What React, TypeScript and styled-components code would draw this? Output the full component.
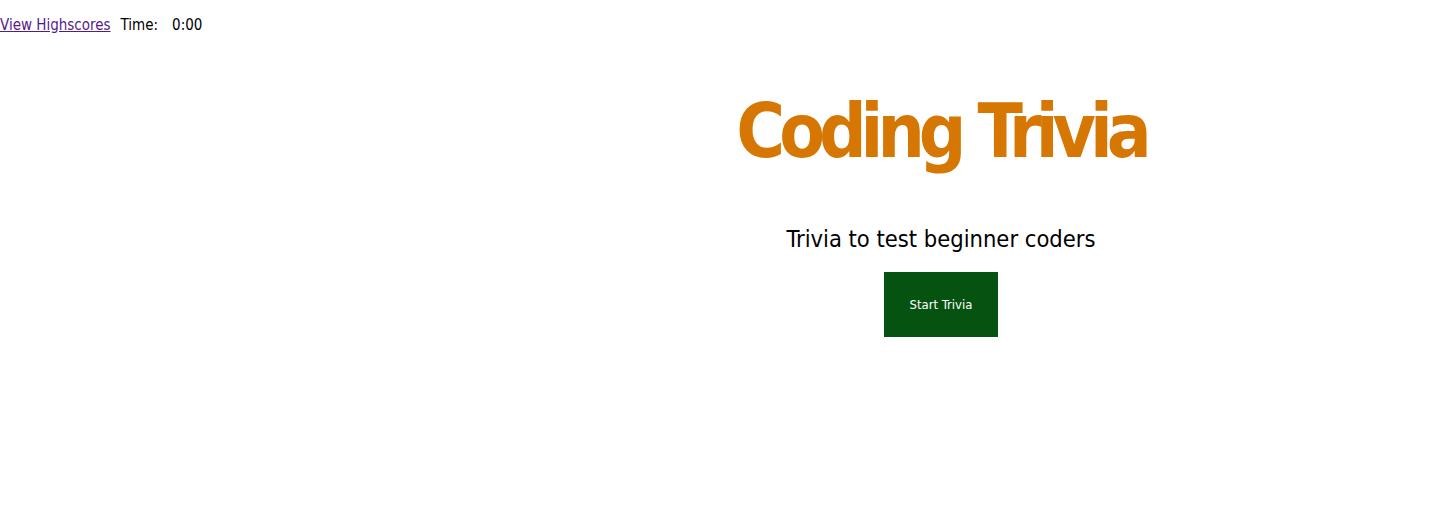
import React from "react";
import styled, { createGlobalStyle } from "styled-components";

const Global = createGlobalStyle`
  body { margin: 0; background: #fff; font-family: "DejaVu Sans Condensed", "Liberation Sans", sans-serif; }
`;

const Header = styled.header`
  display: flex;
  align-items: baseline;
  padding-top: 16px;
  font-size: 15px;
  color: #000;
`;

const Link = styled.a`
  color: #551a8b;
  text-decoration: underline;
  margin-right: 10px;
`;

const TimeLabel = styled.span`
  margin-right: 14px;
`;

const Layout = styled.div`
  display: grid;
  grid-template-columns: 445px 1fr;
`;

const Main = styled.main`
  grid-column: 2;
  display: flex;
  flex-direction: column;
  align-items: center;
`;

const Title = styled.h1`
  margin: 53px 0 0;
  font-size: 74px;
  font-weight: 700;
  color: #d67703;
  line-height: 1.2;
  letter-spacing: -6px;
`;

const Subtitle = styled.p`
  margin: 49px 0 0;
  font-size: 23.5px;
  color: #000;
`;

const StartButton = styled.button`
  margin-top: 19px;
  width: 114px;
  height: 65px;
  border: none;
  background: #065211;
  color: #fff;
  font-family: inherit;
  font-size: 13px;
`;

export default function App() {
  return (
    <>
      <Global />
      <Header>
        <Link href="#">View Highscores</Link>
        <TimeLabel>Time:</TimeLabel>
        <span>0:00</span>
      </Header>
      <Layout>
        <Main>
          <Title>Coding Trivia</Title>
          <Subtitle>Trivia to test beginner coders</Subtitle>
          <StartButton>Start Trivia</StartButton>
        </Main>
      </Layout>
    </>
  );
}
